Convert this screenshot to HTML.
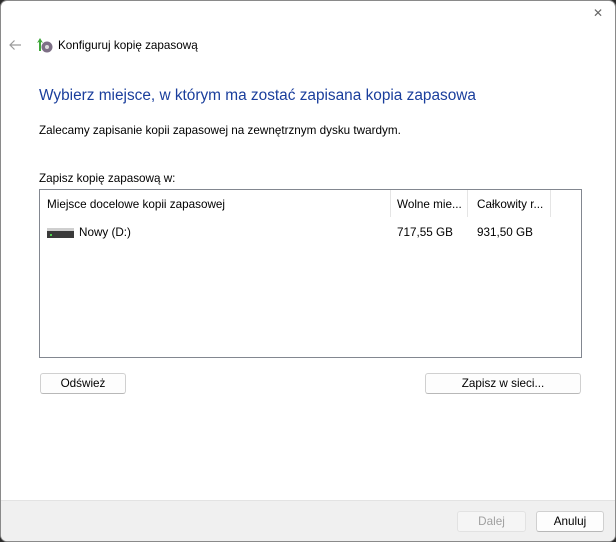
<!DOCTYPE html>
<html><head><meta charset="utf-8"><style>
*{margin:0;padding:0;box-sizing:border-box}
html,body{width:616px;height:542px;overflow:hidden;background:#2b2b2b}
body{font-family:"Liberation Sans","DejaVu Sans",sans-serif;font-size:11.7px;color:#000}
#win{position:absolute;left:0;top:0;width:616px;height:542px;background:#fff;border:1px solid #8a8a8a;border-radius:7px;overflow:hidden}
#c{position:absolute;left:-1px;top:-1px;width:616px;height:542px}
.abs{position:absolute;white-space:nowrap}
.btn{position:absolute;height:21px;border:1px solid #d0d0d0;border-bottom-color:#b8b8b8;border-radius:3px;background:#fdfdfd;text-align:center;line-height:19px}
#footer{position:absolute;left:0;top:500px;width:618px;height:44px;background:#f0f0f0;border-top:1px solid #e3e3e3}
#list{position:absolute;left:39px;top:189px;width:543px;height:169px;border:1px solid #828790;background:#fff}
.sep{position:absolute;top:0;width:1px;height:27px;background:#e5e5e5}
</style></head><body>
<div id="win"><div id="c">
  <div class="abs" style="left:593px;top:6px;font-size:12px;color:#666">✕</div>
  <svg class="abs" style="left:8px;top:39px" width="14" height="12" viewBox="0 0 14 12"><path d="M13 6H2M6.5 1.5L2 6l4.5 4.5" stroke="#9a9a9a" stroke-width="1.2" fill="none"/></svg>
  <svg class="abs" style="left:36px;top:37px" width="18" height="16" viewBox="0 0 18 16">
    <circle cx="11" cy="10" r="5.5" fill="#7d6f86"/><circle cx="11" cy="10" r="2" fill="#ddd"/>
    <path d="M3 14V5l-2 1 3-5 3 5-2-1v9z" fill="#3fa83a"/>
  </svg>
  <div class="abs" style="left:58px;top:39px">Konfiguruj kopię zapasową</div>
  <div class="abs" style="left:39px;top:87px;font-size:15.4px;color:#1a3e9c">Wybierz miejsce, w którym ma zostać zapisana kopia zapasowa</div>
  <div class="abs" style="left:39px;top:124px">Zalecamy zapisanie kopii zapasowej na zewnętrznym dysku twardym.</div>
  <div class="abs" style="left:39px;top:172px">Zapisz kopię zapasową w:</div>
  <div id="list">
    <div class="sep" style="left:350px"></div>
    <div class="sep" style="left:427px"></div>
    <div class="sep" style="left:510px"></div>
    <div class="abs" style="left:7px;top:8px">Miejsce docelowe kopii zapasowej</div>
    <div class="abs" style="left:357px;top:8px">Wolne mie...</div>
    <div class="abs" style="left:437px;top:8px">Całkowity r...</div>
    <div class="abs" style="left:7px;top:38px;width:27px;height:10px;background:linear-gradient(#cfcfcf 0,#cfcfcf 30%,#3a3a3a 30%)"></div>
    <div class="abs" style="left:10px;top:44px;width:2px;height:2px;background:#4fd14f"></div>
    <div class="abs" style="left:39px;top:36px">Nowy (D:)</div>
    <div class="abs" style="left:357px;top:36px">717,55 GB</div>
    <div class="abs" style="left:437px;top:36px">931,50 GB</div>
  </div>
  <div class="btn" style="left:40px;top:373px;width:86px">Odśwież</div>
  <div class="btn" style="left:425px;top:373px;width:156px">Zapisz w sieci...</div>
  <div id="footer">
    <div class="btn" style="left:457px;top:10px;width:69px;color:#a0a0a0;background:#f5f5f5;border-color:#e2e2e2">Dalej</div>
    <div class="btn" style="left:536px;top:10px;width:68px">Anuluj</div>
  </div>
</div></div>
</body></html>
